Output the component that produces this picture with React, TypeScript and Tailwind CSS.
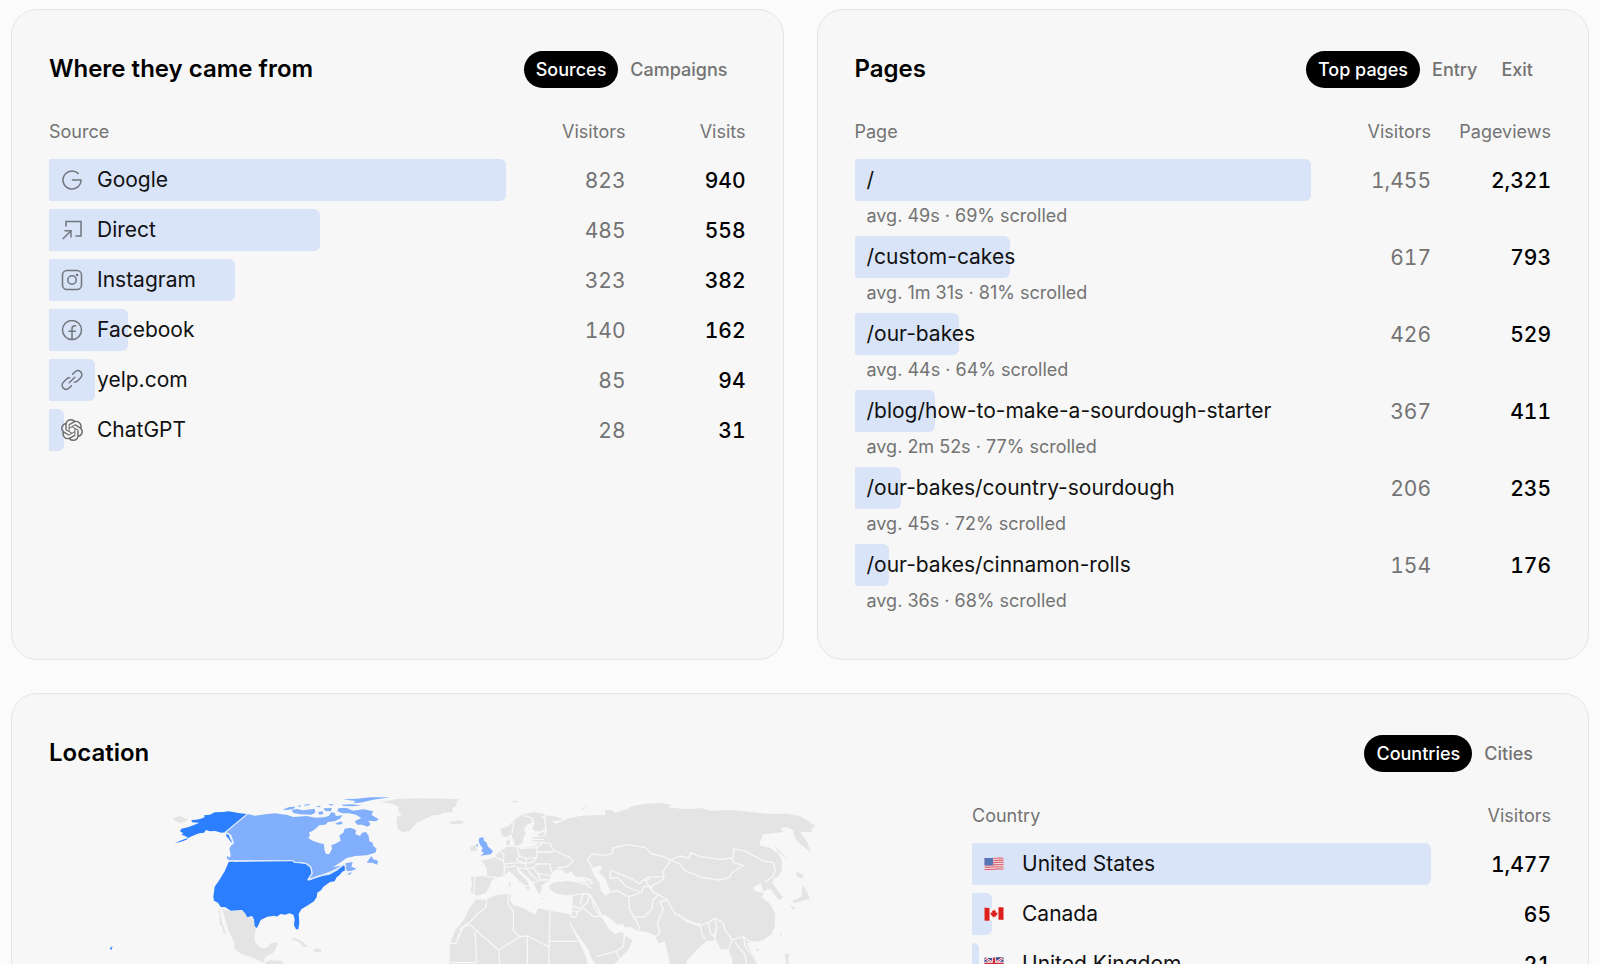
import React, { useState } from "react";
import { SiOpenai } from "react-icons/si";

const iconProps = {
  viewBox: "1 1 22 22",
  fill: "none",
  stroke: "currentColor",
  strokeWidth: 1.5,
  strokeLinecap: "round" as const,
  strokeLinejoin: "round" as const,
  className: "size-[22px] shrink-0 text-[#71757d]",
  "aria-hidden": true,
};

const GoogleIcon = () => (
  <svg {...iconProps}>
    <path d="M12.500 12H21a9 9 0 1 1-2.900-6.600" />
  </svg>
);

const DirectIcon = () => (
  <svg {...iconProps} strokeLinecap="butt" strokeLinejoin="miter">
    <path d="M6 8.500V3.500h15v14.500h-5.500" />
    <path d="M2.800 21 11 12.800" />
    <path d="M4.500 12.800H11V19.500" />
  </svg>
);

const InstagramIcon = () => (
  <svg {...iconProps}>
    <rect x="2.500" y="2.500" width="19" height="19" rx="4.500" />
    <circle cx="12" cy="12" r="4.200" />
    <circle cx="17" cy="7" r="0.600" fill="currentColor" />
  </svg>
);

const FacebookIcon = () => (
  <svg {...iconProps}>
    <circle cx="12" cy="12" r="9.500" />
    <path d="M12 21.500V10.800c0-1.900 1.200-3 3-3h.6M9 13.200h6.300" />
  </svg>
);

const LinkIcon = () => (
  <svg {...iconProps}>
    <path d="m9.200 14.800 5.600-5.600" />
    <path d="m12.600 6.300 2.300-2.300a4.200 4.200 0 0 1 5.500-.4 4.200 4.200 0 0 1 .2 6.200l-3.200 3.200a4 4 0 0 1-3 1.200" />
    <path d="m11.400 17.700-2.300 2.300a4.200 4.200 0 0 1-5.500.4 4.200 4.200 0 0 1-.2-6.200L6.600 11a4 4 0 0 1 3-1.200" />
  </svg>
);

const OpenAiIcon = () => (
  <SiOpenai className="size-[22px] shrink-0 text-[#6b6b6b]" aria-hidden />
);

const flagClass = "h-4 w-5 shrink-0";

const UsFlag = () => (
  <svg viewBox="0 0 20 16" className={flagClass} aria-hidden>
    <clipPath id="us">
      <path d="M.5 1.500c6 1.500 12.500-1.200 19 0v12.500c-6.500-1.200-13 1.500-19 .5z" />
    </clipPath>
    <g clipPath="url(#us)">
      <rect width="20" height="16" fill="#f2dde2" />
      <path
        d="M0 2.200c6 1.400 13-1.200 20 0M0 4.400c6 1.400 13-1.200 20 0M0 6.600c6 1.400 13-1.200 20 0M0 8.800c6 1.400 13-1.200 20 0M0 11c6 1.400 13-1.200 20 0M0 13.200c6 1.400 13-1.200 20 0"
        stroke="#d9606c"
        strokeWidth="1.100"
        fill="none"
      />
      <path d="M0 1.500c3 .8 6 .5 9 0v7.500c-3 .5-6 .8-9 .3z" fill="#5676b8" />
    </g>
  </svg>
);

const CaFlag = () => (
  <svg viewBox="0 0 20 16" className={flagClass} aria-hidden>
    <path d="M.5 1.500c6 1.500 12.500-1.200 19 0v12.500c-6.500-1.200-13 1.500-19 .5z" fill="#f8f3f3" />
    <path d="M.5 1.500c1.600.4 3.300.5 5 .4v12.900c-1.700.1-3.400 0-5-.3zM14.500 1.200c1.700-.1 3.400 0 5 .3v12.500c-1.600-.3-3.300-.3-5-.2z" fill="#dc1f1c" />
    <path d="m10 3.400 1 1.700.9-.3-.2 2.100 1.800-.6-.4 1.300.6.500-2 1.800.1.800-1.500-.2-.1 1.500h-.4L9.700 10.500l-1.500.2.1-.8-2-1.800.6-.5-.4-1.300 1.800.6-.2-2.100.9.300z" fill="#dc1f1c" />
  </svg>
);

const UkFlag = () => (
  <svg viewBox="0 0 20 16" className={flagClass} aria-hidden>
    <clipPath id="uk">
      <path d="M.5 1.500c6 1.500 12.500-1.200 19 0v12.500c-6.500-1.200-13 1.500-19 .5z" />
    </clipPath>
    <g clipPath="url(#uk)">
      <rect width="20" height="16" fill="#2f4287" />
      <path d="M1 2l18 12M19 2 1 14" stroke="#f4f0f2" strokeWidth="2.600" />
      <path d="M1 2l18 12M19 2 1 14" stroke="#cf2f3c" strokeWidth="0.900" />
      <path d="M10 0v16M0 8h20" stroke="#f4f0f2" strokeWidth="4.400" />
      <path d="M10 0v16M0 8h20" stroke="#cf2f3c" strokeWidth="2.400" />
    </g>
  </svg>
);

type Row = {
  label: string;
  values: number[];
  icon?: React.ReactNode;
  note?: string;
};

const sources: Row[] = [
  { label: "Google", values: [823, 940], icon: <GoogleIcon /> },
  { label: "Direct", values: [485, 558], icon: <DirectIcon /> },
  { label: "Instagram", values: [323, 382], icon: <InstagramIcon /> },
  { label: "Facebook", values: [140, 162], icon: <FacebookIcon /> },
  { label: "yelp.com", values: [85, 94], icon: <LinkIcon /> },
  { label: "ChatGPT", values: [28, 31], icon: <OpenAiIcon /> },
];

const pages: Row[] = [
  { label: "/", values: [1455, 2321], note: "avg. 49s · 69% scrolled" },
  { label: "/custom-cakes", values: [617, 793], note: "avg. 1m 31s · 81% scrolled" },
  { label: "/our-bakes", values: [426, 529], note: "avg. 44s · 64% scrolled" },
  { label: "/blog/how-to-make-a-sourdough-starter", values: [367, 411], note: "avg. 2m 52s · 77% scrolled" },
  { label: "/our-bakes/country-sourdough", values: [206, 235], note: "avg. 45s · 72% scrolled" },
  { label: "/our-bakes/cinnamon-rolls", values: [154, 176], note: "avg. 36s · 68% scrolled" },
];

const countries: Row[] = [
  { label: "United States", values: [1477], icon: <UsFlag /> },
  { label: "Canada", values: [65], icon: <CaFlag /> },
  { label: "United Kingdom", values: [21], icon: <UkFlag /> },
];

function Tabs({ items }: { items: string[] }) {
  const [active, setActive] = useState(0);
  return (
    <div role="tablist" className="flex px-[6px] py-[5px]">
      {items.map((item, i) => (
        <button
          key={item}
          type="button"
          role="tab"
          aria-selected={i === active}
          onClick={() => setActive(i)}
          className={
            i === active
              ? "h-[37px] rounded-full bg-black px-3 text-[18px] font-medium text-white"
              : "h-[37px] rounded-full px-3 text-[18px] font-medium text-[#737373]"
          }
        >
          {item}
        </button>
      ))}
    </div>
  );
}

function Card({ title, tabs, children }: { title: string; tabs: string[]; children: React.ReactNode }) {
  return (
    <section className="rounded-[26px] border border-[#e5e5e5] bg-[#f7f7f7] px-[37px] pt-9 pb-[38px]">
      <header className="flex items-start justify-between">
        <h2 className="text-[24px] leading-[45px] font-semibold text-black">{title}</h2>
        <Tabs items={tabs} />
      </header>
      {children}
    </section>
  );
}

function StatsTable({ columns, rows, wideGap = false }: { columns: string[]; rows: Row[]; wideGap?: boolean }) {
  const totals = rows.map((row) => row.values[row.values.length - 1]);
  const max = Math.max(...totals);
  return (
    <table className="mt-6 w-full table-fixed border-collapse">
      <thead>
        <tr>
          {columns.map((column, i) => (
            <th
              key={column}
              scope="col"
              className={
                i === 0
                  ? "p-0 pb-3 text-left text-[18px] leading-[30px] font-normal text-[#737373]"
                  : "w-[120px] p-0 pb-3 text-right text-[18px] leading-[30px] font-normal text-[#737373]"
              }
            >
              {column}
            </th>
          ))}
        </tr>
      </thead>
      <tbody>
        {rows.map((row, r) => (
          <tr key={row.label}>
            <td className={row.note ? "p-0 pb-[5px] align-top" : "p-0 pb-2 align-top"}>
              <div className="grid">
                <div
                  className="col-start-1 row-start-1 h-[42px] rounded-l-xs rounded-r-md bg-[#d9e4f8]"
                  style={{ width: `${(totals[r] / max) * 100}%` }}
                />
                <div
                  className={
                    wideGap
                      ? "col-start-1 row-start-1 flex h-[42px] items-center gap-[18px] pl-3"
                      : "col-start-1 row-start-1 flex h-[42px] items-center gap-[14px] pl-3"
                  }
                >
                  {row.icon}
                  <span className="text-[21px] whitespace-nowrap text-[#111]">{row.label}</span>
                </div>
              </div>
              {row.note && <p className="pl-3 text-[18px] leading-[30px] text-[#737373]">{row.note}</p>}
            </td>
            {row.values.map((value, i) => (
              <td
                key={i}
                className={
                  i === row.values.length - 1
                    ? "p-0 text-right align-top text-[21px] leading-[43px] font-medium text-black tabular-nums"
                    : "p-0 text-right align-top text-[21px] leading-[43px] text-[#737373] tabular-nums"
                }
              >
                {value.toLocaleString("en-US")}
              </td>
            ))}
          </tr>
        ))}
      </tbody>
    </table>
  );
}

function WorldMap() {
  return (
    <svg viewBox="147 -9 2637 579" className="w-full" role="img" aria-label="Visitors by country" strokeLinejoin="round">
      <g transform="translate(480 0)">
        <g fill="#e4e4e4">
          <path d="M38 118 48 112 62 108 72 114 84 118 74 126 58 128 46 123z" />
          <path d="M178 383 182 405 186 428 192 440 199 464 191 458 186 440 178 432 179 410 175 392z" />
          <path d="M186 386 210 394 248 393 256 402 262 412 279 414 289 440 284 462 284 482 292 496 304 504 320 504 332 490 354 487 348 504 338 520 326 524 314 534 312 548 297 541 270 530 240 520 222 506 224 488 214 470 204 450 198 424 190 398z" />
          <path d="M314 548 330 540 366 543 372 562 330 562z" />
          <path d="M395 474 412 476 432 488 444 500 432 501 416 486 396 478z" />
          <path d="M458 512 466 505 482 508 484 516 462 515z" />
        </g>
        <g fill="#82affb">
          <path d="M262 102 285 107 315 103 345 100 382 105 400 111 440 108 466 113 492 112 506 108 514 97 524 98 528 108 548 106 540 116 524 124 504 126 496 134 478 136 462 150 447 158 450 166 445 174 458 182 480 190 492 192 493 208 498 222 508 222 516 206 514 195 524 192 542 182 538 166 550 158 554 146 572 143 588 150 586 162 600 168 606 158 618 156 626 168 628 184 638 188 640 198 650 206 646 218 620 226 586 228 560 234 540 248 518 262 548 256 512 274 486 284 470 288 462 296 444 298 458 282 455 264 440 250 405 246 398 241 222 241 210 236 212 222 208 206 214 196 222 190 214 166 206 160 196 157z" />
          <path d="M395 90 410 87 430 91 464 86 466 98 454 104 420 103 400 99z" />
          <path d="M367 89 388 81 406 80 400 87 380 90z" />
          <path d="M548 58 590 56 630 52 690 52 640 59 600 68 580 69 586 63z" />
          <path d="M490 85 516 84 512 94 496 93zM474 96 488 94 490 102 478 104z" />
          <path d="M536 84 560 84 580 92 610 88 640 94 634 104 656 118 648 124 624 122 632 132 624 140 606 134 592 134 584 124 604 114 588 104 566 100 548 100 532 94z" />
          <path d="M544 74 576 73 604 76 580 79 550 78zM432 74 450 72 448 76 434 77zM504 72 522 73 514 77zM466 79 482 77 480 82zM412 78 422 76 420 82zM526 130 544 124 548 132 532 134z" />
          <path d="M202 228 216 236 220 246 210 244 200 234z" />
          <path d="M620 248 634 228 640 238 654 242 652 254 636 248z" />
          <path d="M556 250 578 246 574 260 590 266 576 272 562 274 558 266z" />
          <path d="M560 282 576 276 570 284zM530 268 552 256 556 266z" />
        </g>
        <g fill="#2b7fff">
          <path d="M262 102 240 100 206 94 190 96 164 97 150 104 132 106 134 112 118 118 94 121 96 127 118 128 100 136 84 142 64 146 60 154 70 160 64 164 76 168 84 174 102 166 118 160 132 158 138 150 150 154 166 153 184 158 196 157 228 132z" />
          <path d="M84 174 66 180 44 189 60 186 80 179z" />
          <path d="M198 162 206 164 210 174 216 180 214 188 206 176 200 170z" />
          <path d="M206 246 398 243 404 248 424 250 438 252 452 264 455 282 444 298 446 302 470 293 486 288 508 284 530 272 552 256 557 270 546 276 538 286 530 292 524 304 510 306 490 320 484 330 472 338 470 352 462 364 446 374 424 388 416 402 418 428 415 448 408 448 402 436 404 418 400 404 388 400 376 404 362 402 350 410 344 407 322 410 302 420 294 438 290 444 284 438 282 418 276 408 262 412 254 398 246 390 212 392 196 382 182 381 174 368 162 362 160 350 164 320 178 300 194 274z" />
        </g>
        <g fill="none" stroke="#dbe8fb" strokeWidth="4">
          <path d="M262 102 196 157 208 163 214 180 220 184" />
          <path d="M206 242H398L404 247 424 248 440 251 453 262 456 280 444 299 470 291 488 285 512 278 532 268 550 254 557 256 556 270" />
        </g>
        <path d="M-148 504 -144 500 -146 508 -150 507z" fill="#2b7fff" stroke="#2b7fff" strokeWidth="2" />
      </g>

      <g transform="translate(1110 0)">
        <g fill="#e4e4e4">
          <path d="M30 66 54 62 80 57 150 55 268 57 260 66 258 78 246 84 250 96 222 98 210 104 190 106 166 116 140 128 128 142 118 154 98 156 84 148 80 130 80 112 96 104 84 94 86 80 66 71z" />
          <path d="M236 124 248 125 262 121 282 124 278 130 258 133 244 131z" />
          <path d="M301 200 314 196 322 206 316 214 302 213z" />
          <path d="M390 146 416 138 432 120 458 103 490 97 524 102 524 108 500 108 486 114 484 128 468 136 462 150 468 162 460 174 458 188 446 196 436 198 430 180 424 162 410 172 396 168z" />
          <path d="M486 108 512 106 524 120 528 140 516 154 496 154 486 146 494 128z" />
          <path d="M408 184 420 178 420 194 410 196z" />
          <path d="M528 152 522 114 530 106 560 110 578 116 570 122 546 122 556 132 576 124 600 114 630 108 680 105 706 106 704 90 724 91 748 116 736 98 770 88 788 78 830 71 870 69 905 74 892 82 950 88 996 84 1020 92 1090 90 1140 96 1196 102 1250 101 1290 108 1315 122 1336 138 1324 146 1326 156 1290 156 1310 182 1322 216 1300 200 1280 182 1272 164 1270 150 1250 142 1232 144 1240 156 1180 163 1172 180 1168 196 1200 203 1224 220 1236 244 1236 270 1224 290 1210 296 1212 312 1222 330 1240 352 1228 360 1214 344 1204 330 1192 326 1182 336 1172 310 1150 322 1152 332 1182 340 1174 352 1200 372 1216 400 1214 440 1205 462 1180 480 1150 488 1130 490 1140 510 1160 540 1166 562 1090 562 1085 530 1070 508 1052 508 1038 480 1010 484 990 500 952 540 946 562 902 562 895 530 885 484 865 490 855 465 830 456 800 452 784 442 766 442 756 432 742 434 724 416 702 404 692 408 706 428 716 446 735 462 756 455 766 468 788 480 776 508 740 545 720 562 682 562 655 520 625 468 598 424 606 410 608 346 588 345 562 342 542 330 536 318 548 308 590 303 625 308 652 304 636 294 612 288 604 274 588 282 576 268 552 270 542 284 540 302 522 312 514 318 516 330 508 344 498 326 490 308 474 292 458 278 444 264 438 268 452 284 470 300 478 320 460 312 446 302 430 284 416 272 402 288 380 292 364 302 358 320 346 340 320 347 302 335 306 310 302 292 330 288 352 290 350 264 334 242 356 238 374 230 390 212 404 206 412 200 440 200 450 204 500 198 502 190 488 188 488 172 516 170 500 164z" />
          <path d="M318 358 346 360 376 346 412 342 424 346 420 362 430 374 460 384 494 404 504 384 540 392 574 398 600 402 606 424 596 424 622 476 644 520 656 562 238 562 240 492 256 450 284 416 298 384z" />
          <path d="M464 322 478 320 476 330zM416 308 422 306 422 320 416 320zM512 354 530 356 516 358zM424 64 446 62 442 67 428 67z" />
        </g>
        <path
          fill="#f7f7f7"
          d="M664 264 690 256 698 262 686 276 706 296 722 336 708 348 692 332 688 308 670 284zM598 428 606 440 630 474 658 512 660 540 640 505z"
        />
        <path fill="#82affb" d="M328 174 340 171 342 182 350 188 354 200 362 206 369 214 362 223 332 227 342 218 334 214 338 204 330 194 326 184zM316 196 323 192 324 200z" />
        <g fill="none" stroke="#f7f7f7" strokeWidth="4">
          <path d="M350 358 348 382 322 402 298 428 280 440 258 490H240M300 434 386 510 424 486 450 470 472 468 540 502M315 455 320 548 240 548M416 344 414 372 430 394 430 452 450 470M540 392 536 562M540 484H630M386 510 390 562M472 468 472 562M262 470 272 460 272 444 300 434" />
          <path d="M432 122 426 160M458 106 486 114M524 108 528 148M314 290 312 340M352 290 378 292M374 230 400 242 404 262 402 286M390 214 402 222 400 242M440 200 448 228 440 240 466 250 470 236 448 228M404 252 440 248 466 250 490 246 500 232 502 202M470 236 500 232M450 206 500 202 520 188 540 190 550 210 600 232 610 244 590 260 560 264M502 216 550 216M440 262 466 266 490 264 500 252 540 252 544 276M490 264 504 280 540 286M466 250 470 266 480 280 500 298M504 280 510 300 490 308M490 186 520 188M490 178 522 178M510 300 540 300M400 262 436 258M520 170 530 152M608 378 630 384 650 370 660 344M608 392 622 396 640 384 672 410 694 408M608 346 640 340 660 344 676 370 694 404M604 410 616 412 624 396M636 294 660 298 668 310M644 308 664 326" />
        </g>
      </g>

      <g transform="translate(1740 0)">
        <g fill="none" stroke="#f7f7f7" strokeWidth="4">
          <path d="M36 262 22 236 40 222 70 226 98 220 98 204 140 194 194 202 216 222 250 230 272 240 262 258 248 276 252 290 205 292 190 300 178 312 154 296 124 284 92 270 90 296 112 292 140 320 180 336" />
          <path d="M272 240 300 228 328 234 332 218 362 230 420 238 456 234 460 248 490 256 458 276 448 292 420 300 366 292 314 272 300 252z" />
          <path d="M458 234 462 206 498 214 548 242 580 248 586 270 578 290 556 306M578 306 596 330" />
          <path d="M94 336 110 332 146 350 184 338 190 320 212 320 218 336 236 344 218 360 216 386 194 410 162 412 148 386 146 350M162 412 178 440 174 452M218 336 196 302 210 298M236 344 262 360 284 400 320 420 360 436 384 428 404 414 430 428 434 448 456 480 490 470 506 484 534 488M262 360 238 366 250 386 232 430 240 456 230 470M296 404 320 424 362 440 356 428M362 440 366 462 376 480M384 428 392 460 402 470 412 440M404 414 410 440 404 480 414 500M456 480 444 510 454 552M466 486 482 510 494 520 500 552M490 470 496 500 520 530 534 552M212 320 250 298 252 290M134 458 130 500 108 514 50 530M108 514 120 538M0 290 20 296 34 314M0 312 24 310M10 340 0 372M22 340 36 356 44 386 66 412" />
        </g>
        <g fill="#e4e4e4">
          <path d="M584 198 598 212 622 237 612 230 592 212zM648 276 672 284 666 294 652 292zM668 314 680 332 690 356 668 362 642 370 638 362 664 350zM630 376 646 382 640 391zM600 458 605 464 601 474zM527 508 538 506 534 516zM615 518 628 524 624 545 632 562 618 562z" />
          <path d="M0 92 18 78 22 76 8 90zM80 90 96 90 118 112 104 106z" />
        </g>
      </g>
    </svg>
  );
}

export default function App() {
  return (
    <main className="flex h-screen flex-col gap-[33px] overflow-hidden bg-[#fbfbfb] px-[11px] pt-[9px] font-['Inter',sans-serif]">
      <div className="grid shrink-0 grid-cols-2 gap-[33px]">
        <Card title="Where they came from" tabs={["Sources", "Campaigns"]}>
          <StatsTable columns={["Source", "Visitors", "Visits"]} rows={sources} />
        </Card>
        <Card title="Pages" tabs={["Top pages", "Entry", "Exit"]}>
          <StatsTable columns={["Page", "Visitors", "Pageviews"]} rows={pages} />
        </Card>
      </div>
      <div className="shrink-0">
        <Card title="Location" tabs={["Countries", "Cities"]}>
          <div className="grid grid-cols-[879fr_579fr] items-start gap-11">
            <WorldMap />
            <StatsTable columns={["Country", "Visitors"]} rows={countries} wideGap />
          </div>
        </Card>
      </div>
    </main>
  );
}
